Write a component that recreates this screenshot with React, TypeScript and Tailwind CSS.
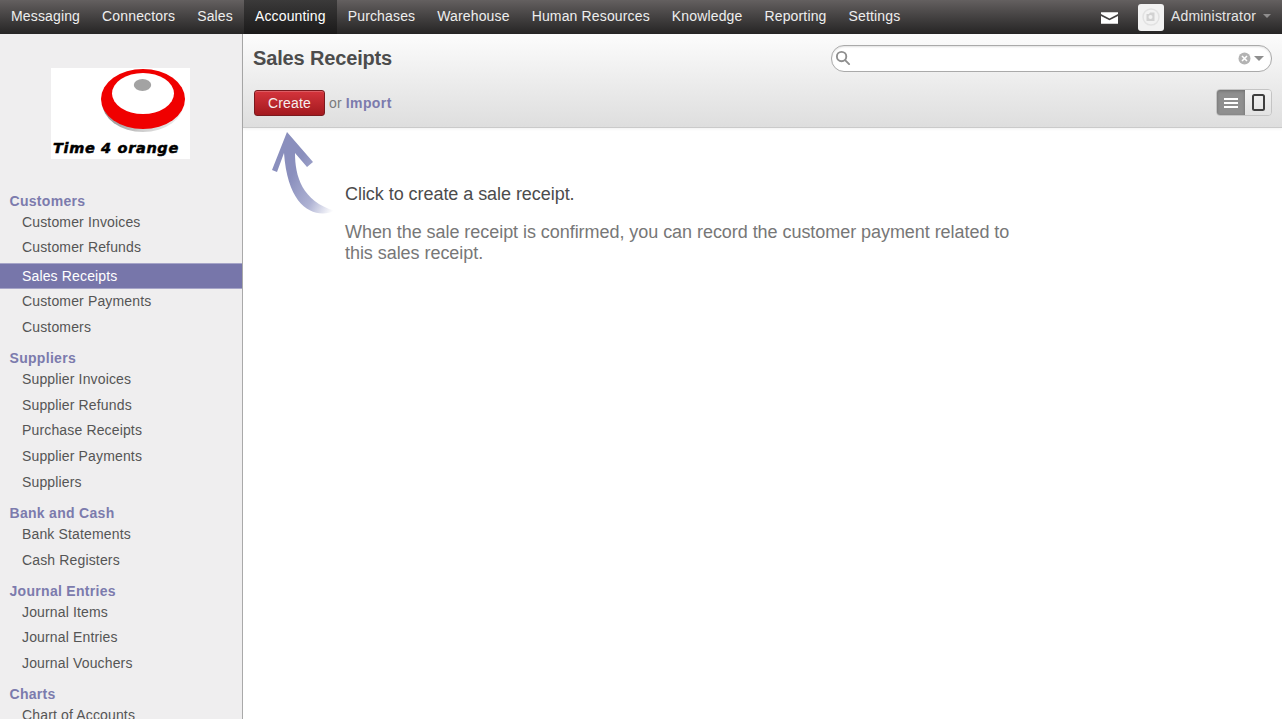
import React from 'react';

const topMenu = ['Messaging', 'Connectors', 'Sales', 'Accounting', 'Purchases', 'Warehouse', 'Human Resources', 'Knowledge', 'Reporting', 'Settings'];

const sideMenu = [
  { title: 'Customers', items: ['Customer Invoices', 'Customer Refunds', 'Sales Receipts', 'Customer Payments', 'Customers'] },
  { title: 'Suppliers', items: ['Supplier Invoices', 'Supplier Refunds', 'Purchase Receipts', 'Supplier Payments', 'Suppliers'] },
  { title: 'Bank and Cash', items: ['Bank Statements', 'Cash Registers'] },
  { title: 'Journal Entries', items: ['Journal Items', 'Journal Entries', 'Journal Vouchers'] },
  { title: 'Charts', items: ['Chart of Accounts'] },
];

function Logo() {
  return (
    <div className="relative w-[139px] h-[91px] bg-white overflow-hidden">
      <svg width="139" height="91" viewBox="0 0 139 91" className="absolute left-0 top-0">
        <defs>
          <linearGradient id="logoRim" x1="0" y1="0" x2="1" y2="0">
            <stop offset="0" stopColor="#8f8f8f" />
            <stop offset="0.5" stopColor="#cfcfcf" />
            <stop offset="1" stopColor="#f0f0f0" />
          </linearGradient>
        </defs>
        <ellipse cx="92" cy="34" rx="41" ry="30" fill="url(#logoRim)" />
        <ellipse cx="92" cy="31" rx="42" ry="30" fill="#f00000" />
        <ellipse cx="92" cy="25.500" rx="31" ry="20.500" fill="#ffffff" />
        <ellipse cx="91.500" cy="17" rx="8.700" ry="6" fill="#a3a3a3" />
      </svg>
      <span className="absolute left-[2px] top-[71px] text-[14.500px] leading-[18px] font-bold italic tracking-[0.65px] text-black whitespace-nowrap font-['DejaVu_Sans',sans-serif] [-webkit-text-stroke:0.5px_black]">
        Time 4 orange
      </span>
    </div>
  );
}

function Arrow() {
  return (
    <svg width="66" height="86" viewBox="0 0 66 86" className="absolute left-[270px] top-[131px]">
      <defs>
        <linearGradient id="arrowFade" x1="0.3" y1="0.55" x2="0.95" y2="1">
          <stop offset="0" stopColor="#8a8fbd" />
          <stop offset="0.55" stopColor="#aeb2d3" />
          <stop offset="1" stopColor="#ffffff" />
        </linearGradient>
      </defs>
      <path
        d="M17 1 L43 31 L37 36 L25 22 C25 45 32 70 65 80 C45 88 18 78 14 22 L7 41 L2 39 Z"
        fill="url(#arrowFade)"
      />
    </svg>
  );
}

export default function App() {
  return (
    <div className="relative h-screen overflow-hidden flex flex-col bg-white font-['Liberation_Sans',Arial,sans-serif] text-[14px] tracking-[0.15px]">
      <nav className="h-[34px] shrink-0 flex items-stretch bg-gradient-to-b from-[#646060] to-[#262525] text-[#eeeeee]">
        {topMenu.map((name) => (
          <a
            key={name}
            className={
              name === 'Accounting'
                ? 'flex items-center px-[11px] pb-[2px] text-white bg-gradient-to-b from-[#3b3a3a] to-[#1b1a1a]'
                : 'flex items-center px-[11px] pb-[2px]'
            }
          >
            {name}
          </a>
        ))}
        <div className="ml-auto flex items-center pr-[11px]">
          <svg width="17" height="12" viewBox="0 0 18 12" className="mr-[20px] mt-[2px]">
            <path d="M0 0 H18 V1.800 L9 6.500 L0 1.800 Z" fill="#fff" />
            <path d="M0 3.800 L9 8.500 L18 3.800 V12 H0 Z" fill="#fff" />
          </svg>
          <div className="w-[26px] h-[27px] rounded-[3px] bg-[#f2f2f2] flex items-center justify-center mr-[7px]">
            <svg width="20" height="20" viewBox="0 0 20 20">
              <circle cx="10" cy="10" r="8" fill="none" stroke="#e2e2e2" strokeWidth="1.500" />
              <path d="M5.500 7 H8 L9 5.500 H13.500 V14 H5.500 Z" fill="#d2d2d2" />
              <circle cx="9.500" cy="10" r="2" fill="#f2f2f2" />
            </svg>
          </div>
          <span className="text-[#e6e6e6] tracking-[0.2px] pb-[2px]">Administrator</span>
          <span className="ml-[7px] mt-[-2px] w-0 h-0 border-x-[4px] border-x-transparent border-t-[4px] border-t-[#8f8d8d]" />
        </div>
      </nav>

      <div className="flex flex-1 min-h-0">
        <aside className="w-[243px] shrink-0 bg-[#efeeef] border-r border-[#a9a9a9] overflow-hidden">
          <div className="flex justify-center pt-[34px] pb-[33.500px] pr-[1px]">
            <Logo />
          </div>
          {sideMenu.map((section) => (
            <div key={section.title} className="mb-[9.300px]">
              <div className="pl-[9.500px] h-[17.200px] leading-[17px] font-bold tracking-[0.3px] text-[#7c7bad]">{section.title}</div>
              {section.items.map((item) => (
                <a
                  key={item}
                  className={
                    item === 'Sales Receipts'
                      ? 'block box-border h-[26px] mt-[2px] leading-[24px] pl-[22px] text-white bg-[#7776aa] border-y border-[#a6a5c8]'
                      : 'block h-[25.700px] leading-[25.700px] pl-[22px] text-[#555555]'
                  }
                >
                  {item}
                </a>
              ))}
            </div>
          ))}
        </aside>

        <main className="flex-1 min-w-0">
          <header className="h-[94px] bg-gradient-to-b from-[#fcfcfc] to-[#dedede] border-b border-[#cacaca] px-[10px] shadow-[0_1px_3px_rgba(0,0,0,0.06)]">
            <div className="flex items-center justify-between h-[48px]">
              <h2 className="text-[20px] font-bold tracking-[-0.15px] text-[#4c4c4c]">Sales Receipts</h2>
              <div className="w-[441px] h-[27px] rounded-[13px] border border-[#aaaaaa] bg-white flex items-center pl-[3px] pr-[7px] shadow-[inset_0_1px_2px_rgba(0,0,0,0.12)]">
                <svg width="16" height="16" viewBox="0 0 17 17" fill="none" stroke="#8e8e8e" strokeWidth="2">
                  <circle cx="7" cy="7" r="5" />
                  <path d="M11 11 L15 15" strokeLinecap="round" />
                </svg>
                <svg width="13" height="13" viewBox="0 0 13 13" className="ml-auto mr-[3px]">
                  <circle cx="6.500" cy="6.500" r="6" fill="#b3b3b3" />
                  <path d="M4 4 L9 9 M9 4 L4 9" stroke="#fff" strokeWidth="1.600" />
                </svg>
                <span className="w-0 h-0 border-x-[5px] border-x-transparent border-t-[5px] border-t-[#8f8f8f]" />
              </div>
            </div>
            <div className="flex items-center justify-between mt-[8px]">
              <div className="flex items-center">
                <button className="w-[71px] h-[26px] ml-[1px] rounded-[3px] border border-[#7a1a1e] bg-gradient-to-b from-[#d5343c] to-[#a3191e] text-[#f5eeee] text-[14px] shadow-[inset_0_1px_0_rgba(255,255,255,0.2)]">
                  Create
                </button>
                <span className="ml-[4px] text-[#7b7b7b]">or</span>
                <a className="ml-[4px] font-bold tracking-[0.4px] text-[#7c7bad]">Import</a>
              </div>
              <div className="flex w-[56px] h-[27px] rounded-[4px] border border-[#c4c4c4] overflow-hidden mt-[-1px]">
                <div className="w-[28px] bg-[#8f8f8f] flex items-center justify-center shadow-[inset_0_1px_3px_rgba(0,0,0,0.25)]">
                  <svg width="14" height="10" viewBox="0 0 14 10" fill="#fff">
                    <rect width="14" height="2" />
                    <rect y="4" width="14" height="2" />
                    <rect y="8" width="14" height="2" />
                  </svg>
                </div>
                <div className="flex-1 bg-gradient-to-b from-[#f3f3f3] to-[#e2e2e2] flex items-center justify-center">
                  <svg width="13" height="17" viewBox="0 0 13 17" fill="none" stroke="#3f3f3f" strokeWidth="2">
                    <rect x="1" y="1" width="11" height="15" rx="1.500" />
                  </svg>
                </div>
              </div>
            </div>
          </header>

          <section className="pl-[102px] pt-[56px] w-[790px] tracking-[-0.05px]">
            <p className="text-[18px] leading-[21px] text-[#4c4c4c] mb-[17px]">Click to create a sale receipt.</p>
            <p className="text-[18px] leading-[21px] text-[#777777]">
              When the sale receipt is confirmed, you can record the customer payment related to this sales receipt.
            </p>
          </section>
        </main>
      </div>
      <Arrow />
    </div>
  );
}
